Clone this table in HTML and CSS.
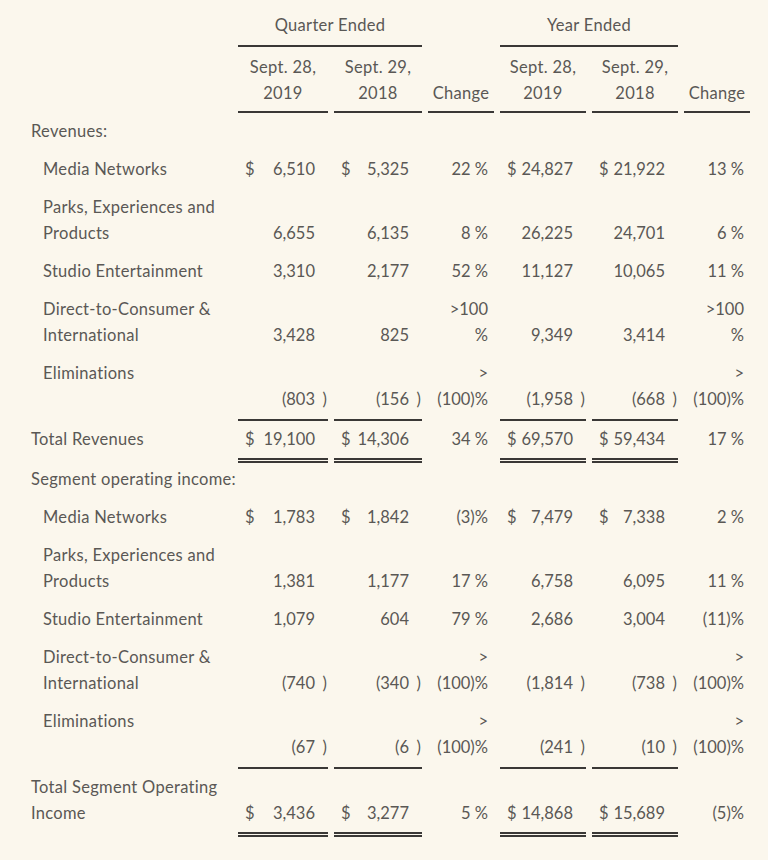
FILE: index.html
```html
<!DOCTYPE html>
<html lang="en">
<head>
<meta charset="utf-8">
<title>Segment results</title>
<link rel="stylesheet" href="styles.css">
</head>
<body>
<div class="wrap">
<table class="fin">
  <colgroup>
    <col class="c-label"><col class="c-a"><col class="c-b"><col class="c-ch"><col class="c-c"><col class="c-d"><col class="c-ch">
  </colgroup>
  <thead>
    <tr class="h1">
      <th></th>
      <th colspan="2" class="rule">Quarter Ended</th>
      <th></th>
      <th colspan="2" class="rule">Year Ended</th>
      <th></th>
    </tr>
    <tr class="h2">
      <th></th>
      <th class="rule">Sept. 28,<br>2019</th>
      <th class="rule">Sept. 29,<br>2018</th>
      <th class="rule">Change</th>
      <th class="rule">Sept. 28,<br>2019</th>
      <th class="rule">Sept. 29,<br>2018</th>
      <th class="rule">Change</th>
    </tr>
  </thead>
  <tbody>
    <tr class="first">
      <td class="label">Revenues:</td>
      <td></td><td></td><td></td><td></td><td></td><td></td>
    </tr>
    <tr>
      <td class="label sub">Media Networks</td>
      <td class="num"><div class="n"><span>$</span><span class="v">6,510</span><span class="p"></span></div></td>
      <td class="num"><div class="n"><span>$</span><span class="v">5,325</span><span class="p"></span></div></td>
      <td class="ch">22&nbsp;%</td>
      <td class="num"><div class="n"><span>$</span><span class="v">24,827</span><span class="p"></span></div></td>
      <td class="num"><div class="n"><span>$</span><span class="v">21,922</span><span class="p"></span></div></td>
      <td class="ch">13&nbsp;%</td>
    </tr>
    <tr>
      <td class="label sub">Parks, Experiences and Products</td>
      <td class="num"><div class="n"><span></span><span class="v">6,655</span><span class="p"></span></div></td>
      <td class="num"><div class="n"><span></span><span class="v">6,135</span><span class="p"></span></div></td>
      <td class="ch">8&nbsp;%</td>
      <td class="num"><div class="n"><span></span><span class="v">26,225</span><span class="p"></span></div></td>
      <td class="num"><div class="n"><span></span><span class="v">24,701</span><span class="p"></span></div></td>
      <td class="ch">6&nbsp;%</td>
    </tr>
    <tr>
      <td class="label sub">Studio Entertainment</td>
      <td class="num"><div class="n"><span></span><span class="v">3,310</span><span class="p"></span></div></td>
      <td class="num"><div class="n"><span></span><span class="v">2,177</span><span class="p"></span></div></td>
      <td class="ch">52&nbsp;%</td>
      <td class="num"><div class="n"><span></span><span class="v">11,127</span><span class="p"></span></div></td>
      <td class="num"><div class="n"><span></span><span class="v">10,065</span><span class="p"></span></div></td>
      <td class="ch">11&nbsp;%</td>
    </tr>
    <tr>
      <td class="label sub">Direct-to-Consumer &amp; International</td>
      <td class="num"><div class="n"><span></span><span class="v">3,428</span><span class="p"></span></div></td>
      <td class="num"><div class="n"><span></span><span class="v">825</span><span class="p"></span></div></td>
      <td class="ch">&gt;100<br>%</td>
      <td class="num"><div class="n"><span></span><span class="v">9,349</span><span class="p"></span></div></td>
      <td class="num"><div class="n"><span></span><span class="v">3,414</span><span class="p"></span></div></td>
      <td class="ch">&gt;100<br>%</td>
    </tr>
    <tr class="pre-total">
      <td class="label sub">Eliminations</td>
      <td class="num rule"><div class="n"><span></span><span class="v">(803</span><span class="p">)</span></div></td>
      <td class="num rule"><div class="n"><span></span><span class="v">(156</span><span class="p">)</span></div></td>
      <td class="ch">&gt;<br>(100)%</td>
      <td class="num rule"><div class="n"><span></span><span class="v">(1,958</span><span class="p">)</span></div></td>
      <td class="num rule"><div class="n"><span></span><span class="v">(668</span><span class="p">)</span></div></td>
      <td class="ch">&gt;<br>(100)%</td>
    </tr>
    <tr class="total">
      <td class="label">Total Revenues</td>
      <td class="num dbl"><div class="n"><span>$</span><span class="v">19,100</span><span class="p"></span></div></td>
      <td class="num dbl"><div class="n"><span>$</span><span class="v">14,306</span><span class="p"></span></div></td>
      <td class="ch">34&nbsp;%</td>
      <td class="num dbl"><div class="n"><span>$</span><span class="v">69,570</span><span class="p"></span></div></td>
      <td class="num dbl"><div class="n"><span>$</span><span class="v">59,434</span><span class="p"></span></div></td>
      <td class="ch">17&nbsp;%</td>
    </tr>
    <tr class="after-total">
      <td class="label wide" colspan="3">Segment operating income:</td>
      <td></td><td></td><td></td><td></td>
    </tr>
    <tr>
      <td class="label sub">Media Networks</td>
      <td class="num"><div class="n"><span>$</span><span class="v">1,783</span><span class="p"></span></div></td>
      <td class="num"><div class="n"><span>$</span><span class="v">1,842</span><span class="p"></span></div></td>
      <td class="ch">(3)%</td>
      <td class="num"><div class="n"><span>$</span><span class="v">7,479</span><span class="p"></span></div></td>
      <td class="num"><div class="n"><span>$</span><span class="v">7,338</span><span class="p"></span></div></td>
      <td class="ch">2&nbsp;%</td>
    </tr>
    <tr>
      <td class="label sub">Parks, Experiences and Products</td>
      <td class="num"><div class="n"><span></span><span class="v">1,381</span><span class="p"></span></div></td>
      <td class="num"><div class="n"><span></span><span class="v">1,177</span><span class="p"></span></div></td>
      <td class="ch">17&nbsp;%</td>
      <td class="num"><div class="n"><span></span><span class="v">6,758</span><span class="p"></span></div></td>
      <td class="num"><div class="n"><span></span><span class="v">6,095</span><span class="p"></span></div></td>
      <td class="ch">11&nbsp;%</td>
    </tr>
    <tr>
      <td class="label sub">Studio Entertainment</td>
      <td class="num"><div class="n"><span></span><span class="v">1,079</span><span class="p"></span></div></td>
      <td class="num"><div class="n"><span></span><span class="v">604</span><span class="p"></span></div></td>
      <td class="ch">79&nbsp;%</td>
      <td class="num"><div class="n"><span></span><span class="v">2,686</span><span class="p"></span></div></td>
      <td class="num"><div class="n"><span></span><span class="v">3,004</span><span class="p"></span></div></td>
      <td class="ch">(11)%</td>
    </tr>
    <tr>
      <td class="label sub">Direct-to-Consumer &amp; International</td>
      <td class="num"><div class="n"><span></span><span class="v">(740</span><span class="p">)</span></div></td>
      <td class="num"><div class="n"><span></span><span class="v">(340</span><span class="p">)</span></div></td>
      <td class="ch">&gt;<br>(100)%</td>
      <td class="num"><div class="n"><span></span><span class="v">(1,814</span><span class="p">)</span></div></td>
      <td class="num"><div class="n"><span></span><span class="v">(738</span><span class="p">)</span></div></td>
      <td class="ch">&gt;<br>(100)%</td>
    </tr>
    <tr class="pre-total">
      <td class="label sub">Eliminations</td>
      <td class="num rule"><div class="n"><span></span><span class="v">(67</span><span class="p">)</span></div></td>
      <td class="num rule"><div class="n"><span></span><span class="v">(6</span><span class="p">)</span></div></td>
      <td class="ch">&gt;<br>(100)%</td>
      <td class="num rule"><div class="n"><span></span><span class="v">(241</span><span class="p">)</span></div></td>
      <td class="num rule"><div class="n"><span></span><span class="v">(10</span><span class="p">)</span></div></td>
      <td class="ch">&gt;<br>(100)%</td>
    </tr>
    <tr class="total">
      <td class="label">Total Segment Operating Income</td>
      <td class="num dbl"><div class="n"><span>$</span><span class="v">3,436</span><span class="p"></span></div></td>
      <td class="num dbl"><div class="n"><span>$</span><span class="v">3,277</span><span class="p"></span></div></td>
      <td class="ch">5&nbsp;%</td>
      <td class="num dbl"><div class="n"><span>$</span><span class="v">14,868</span><span class="p"></span></div></td>
      <td class="num dbl"><div class="n"><span>$</span><span class="v">15,689</span><span class="p"></span></div></td>
      <td class="ch">(5)%</td>
    </tr>
  </tbody>
</table>
</div>
</body>
</html>
```

FILE: styles.css
```css
html, body {
  margin: 0;
  padding: 0;
  background: #fbf7ed;
}

body {
  font-family: Lato, "Noto Sans", sans-serif;
  font-size: 16.5px;
  color: #5a5855;
}

.wrap {
  padding: 7px 0 0 25px;
}

.fin {
  table-layout: fixed;
  border-collapse: separate;
  border-spacing: 6px 0;
  width: 729px;
}

.c-label { width: 201px; }
.c-a { width: 90px; }
.c-b { width: 88px; }
.c-ch { width: 66px; }
.c-c { width: 86px; }
.c-d { width: 86px; }

.fin th,
.fin td {
  padding: 6px 0;
  line-height: 26px;
  font-weight: 400;
  vertical-align: bottom;
}

.fin th {
  text-align: center;
  letter-spacing: 0.3px;
}

.h1 th {
  padding: 5px 0 7px;
  border-bottom: 2px solid transparent;
}

.h2 th {
  padding: 7px 0 5px;
  border-bottom: 2px solid transparent;
}

.fin .rule {
  border-bottom: 2px solid #3a3836;
}

.fin td.label {
  vertical-align: top;
  text-align: left;
  padding-right: 4px;
  letter-spacing: 0.3px;
}

.fin td.wide {
  white-space: nowrap;
}

.fin td.sub {
  padding-left: 12px;
}

.fin td.ch {
  text-align: right;
  padding-right: 6px;
}

.n {
  display: flex;
  padding-left: 7px;
}

.n .v {
  flex: 1;
  text-align: right;
}

.n .p {
  width: 12px;
  text-align: right;
  padding-right: 1px;
}

.first td {
  padding-top: 5px;
}

.pre-total td {
  padding-bottom: 7px;
  border-bottom: 2px solid transparent;
}

.pre-total td.rule {
  border-bottom-color: #3a3836;
}

.total td {
  padding-top: 5px;
  padding-bottom: 6px;
  border-bottom: 5px solid transparent;
}

.total td.dbl {
  border-bottom: 5px double #3a3836;
}

.after-total td {
  padding-top: 3px;
}
```
